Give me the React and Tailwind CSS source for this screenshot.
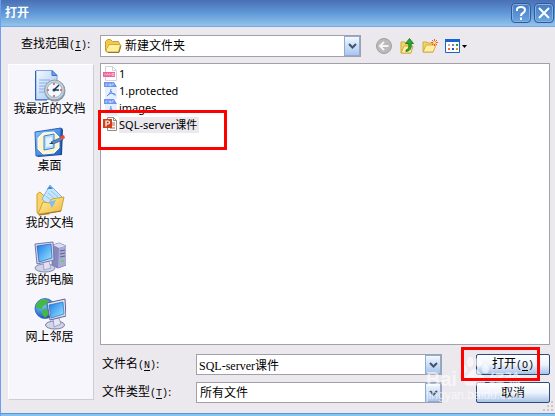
import React, { useState } from "react";

const places = [
  { name: "我最近的文档", icon: RecentIcon },
  { name: "桌面", icon: DesktopIcon },
  { name: "我的文档", icon: DocumentsIcon },
  { name: "我的电脑", icon: ComputerIcon },
  { name: "网上邻居", icon: NetworkIcon },
];

const files = [
  { name: "1", icon: ImageFileIcon },
  { name: "1.protected", icon: PdfIcon },
  { name: "images", icon: PdfIcon },
  { name: "SQL-server课件", icon: PptIcon },
];

function RecentIcon() {
  return (
    <svg width="32" height="32" viewBox="0 0 32 32">
      <defs>
        <linearGradient id="page" x1="0" y1="0" x2="1" y2="1">
          <stop offset="0" stopColor="#f4f9ff" />
          <stop offset="1" stopColor="#a3c4f3" />
        </linearGradient>
      </defs>
      <path d="M2 .5h16l5 5V29.500H2z" fill="url(#page)" stroke="#7ba5e2" />
      <path d="M1.500 1v29H13" fill="none" stroke="#2f62bd" />
      <path d="M18 .5v5h5z" fill="#6fa3ec" stroke="#3d70c4" />
      <path d="M5 10h11M5 13h8M5 16h6M5 19h5M5 22h5" stroke="#86aee8" />
      <circle cx="21" cy="21" r="10.500" fill="#8295a8" />
      <circle cx="20.500" cy="20" r="10" fill="#c5d1dc" stroke="#8f9fae" />
      <circle cx="20.500" cy="20" r="7.500" fill="#f0f9ff" stroke="#9fb2c4" />
      <path d="M20 20l5-5M20 20h5" stroke="#26384e" strokeWidth="1.500" />
      <circle cx="20" cy="20" r="1.500" fill="#26384e" />
      <path d="M20 13v2M20 25v2M13 20h2M26 20h2" stroke="#e8542e" strokeWidth="1.500" />
    </svg>
  );
}

function DesktopIcon() {
  return (
    <svg width="32" height="32" viewBox="0 0 32 32">
      <defs>
        <linearGradient id="desk" x1="0" y1="0" x2="1" y2="1">
          <stop offset="0" stopColor="#8cc6ff" />
          <stop offset="1" stopColor="#1b62c8" />
        </linearGradient>
      </defs>
      <path d="M3 5L28 1l1 2-1 25L4 30l-2-2z" fill="#1d4b96" />
      <path d="M1 5L27 1 26 27 2 29z" fill="url(#desk)" stroke="#2b66bd" />
      <path d="M9 6l11-1 5 5v11l-5 5-11 1-5-5V11z" fill="#fff5cb" stroke="#fffdf1" />
      <path d="M10 9l10-2v14l-10 2z" fill="#b4dcfc" stroke="#3a82d8" />
      <path d="M12 11l6-1v9l-6 1z" fill="#e3f4ff" />
      <path d="M17 15l11-5 1 3-10 4z" fill="#5b8cc9" stroke="#254f88" strokeWidth=".7" />
      <path d="M26 10l4-2 1 3-4 2z" fill="#ef4b2c" />
      <path d="M15 17l3-2 1 2z" fill="#333" />
    </svg>
  );
}

function DocumentsIcon() {
  return (
    <svg width="32" height="32" viewBox="0 0 32 32">
      <defs>
        <linearGradient id="docFolder" x1="0" y1="0" x2="1" y2="1">
          <stop offset="0" stopColor="#fff3a6" />
          <stop offset="1" stopColor="#f0b83c" />
        </linearGradient>
      </defs>
      <path d="M3 10l3-2 3 3 6 2v17L5 31l-2-3z" fill="#f9d568" stroke="#cf9f35" />
      <path d="M16 1l12 12-8 13-12-11z" fill="#c5e5fd" stroke="#7db4e8" />
      <path d="M13 5l3-3 3 3z" fill="#3c86d8" />
      <path d="M12 12l6 5M14 9l7 6M17 7l7 6" stroke="#8ec1f0" />
      <path d="M4 30l5-12 6 1 3-4 12-2-3 14z" fill="url(#docFolder)" stroke="#cfa13a" />
      <path d="M15 18l7-2-4 8z" fill="#7dbdf2" />
      <path d="M5 31l22-4" stroke="#977226" />
    </svg>
  );
}

function ComputerIcon() {
  return (
    <svg width="32" height="32" viewBox="0 0 32 32">
      <defs>
        <linearGradient id="screen" x1="0" y1="0" x2="1" y2="1">
          <stop offset="0" stopColor="#1c79e6" />
          <stop offset="1" stopColor="#9deaff" />
        </linearGradient>
      </defs>
      <path d="M19 4l6-2 7 3v19l-8 3-6-3z" fill="#8689be" stroke="#6d71a8" />
      <path d="M19 4l6-2 7 3-7 2z" fill="#dadcf3" />
      <path d="M25 7l7-2v19l-8 3z" fill="#a8abd4" />
      <path d="M26 10l5-1M26 13l5-1M26 16l5-1" stroke="#5b6094" />
      <circle cx="28.500" cy="20" r="1.300" fill="#63d451" />
      <ellipse cx="11" cy="27" rx="10" ry="4" fill="#cfd1e6" stroke="#8589b2" />
      <path d="M9 20h6l2 7-7 2z" fill="#dfe1f0" stroke="#8b8fb9" strokeWidth=".7" />
      <path d="M1 3l18-2 1 18-17 4z" fill="#d9dbee" stroke="#7477ab" />
      <path d="M3 5l14-2 1 14-13 4z" fill="url(#screen)" stroke="#275fae" strokeWidth=".7" />
    </svg>
  );
}

function NetworkIcon() {
  return (
    <svg width="32" height="32" viewBox="0 0 32 32">
      <defs>
        <radialGradient id="globe" cx=".35" cy=".3" r=".8">
          <stop offset="0" stopColor="#7bd2ff" />
          <stop offset="1" stopColor="#0e46b4" />
        </radialGradient>
      </defs>
      <circle cx="11" cy="10.500" r="10" fill="url(#globe)" stroke="#1c50a8" strokeWidth=".7" />
      <path d="M4 4l5-3 5 1-1 4-4 2-1 3-5-1-1-2zM9 11l5 1 1 4-4 4-3-4zM16 3l3 2-1 3-3-1z" fill="#45b83e" />
      <ellipse cx="21" cy="27" rx="9.500" ry="4" fill="#d3d5e8" stroke="#777ba8" />
      <path d="M19 20h6l2 6-7 3z" fill="#e5e6f3" stroke="#8286b2" strokeWidth=".7" />
      <path d="M13 5l18-4 1 17-16 4z" fill="#e1e3f1" stroke="#5d6299" />
      <path d="M15 7l14-3 1 12-13 4z" fill="url(#screen)" stroke="#246dc2" strokeWidth=".7" />
    </svg>
  );
}

function ImageFileIcon() {
  return (
    <svg width="16" height="17" viewBox="0 0 16 17">
      <path d="M2.500 1.500h7l4 4v10h-11z" fill="#fff" stroke="#d3d3d3" />
      <path d="M9.500 1.500v4h4" fill="none" stroke="#d3d3d3" />
      <path d="M0 7h12v5H0z" fill="#f0609a" />
      <path d="M2 8.500v2M4 10.500v-2l1.500 1 1.500-1v2M9 8.500h2v2H9z" fill="none" stroke="#ffd3e3" strokeWidth=".8" />
    </svg>
  );
}

function PdfIcon() {
  return (
    <svg width="16" height="17" viewBox="0 0 16 17">
      <path d="M2 1h8l4 4v12H2z" fill="#e8effc" />
      <path d="M1 0h10l3 5H1z" fill="#6b95f0" />
      <path d="M3 4V2h1.500M6 4V2h1.500v2M9 4V2h2" fill="none" stroke="#d5e2ff" strokeWidth=".8" />
      <path d="M8 7c0 4-3 6-4 7M8 9c1 3 3 4 5 4M5 13c2-2 5-2 7-1" fill="none" stroke="#5787ee" />
    </svg>
  );
}

function PptIcon() {
  return (
    <svg width="16" height="17" viewBox="0 0 16 17">
      <path d="M4.500 1.500h6l3 3v10h-9z" fill="#fff" stroke="#8b8b8b" />
      <path d="M10.500 1.500v3h3" fill="none" stroke="#8b8b8b" />
      <path d="M9 7h3M9 9h3M7 12h5" stroke="#c8573a" />
      <path d="M0 3h9v9H0z" fill="#d1401d" />
      <path d="M3 10.500V5h2a1.500 1.500 0 0 1 0 3H3" fill="none" stroke="#fff" strokeWidth="1.200" />
    </svg>
  );
}

function FolderIcon() {
  return (
    <svg width="18" height="16" viewBox="0 0 18 16">
      <path d="M1.500 12V3.500l2-2h3l2 2h6l1 2V12l-1 2h-12z" fill="#f3c94b" stroke="#c69c3a" />
      <path d="M5 6.500h11.500l-2 7.500h-11L2 12z" fill="#fff09c" stroke="#d3a843" />
      <path d="M4 14.500h11l2-7" fill="none" stroke="#8f7730" />
    </svg>
  );
}

function BackIcon() {
  return (
    <svg width="16" height="16" viewBox="0 0 16 16">
      <circle cx="8" cy="8" r="7.500" fill="#bababa" stroke="#a0a0a0" />
      <path d="M12.500 8H4.500M8 4L4 8l4 4" fill="none" stroke="#f5f5f5" strokeWidth="2" />
    </svg>
  );
}

function UpIcon() {
  return (
    <svg width="16" height="16" viewBox="0 0 16 16">
      <path d="M2 4h4l1 2h5v9H2z" fill="#f3d566" stroke="#d3aa48" />
      <path d="M2 15L5 8h9l-2 7z" fill="#fff0a0" stroke="#d3aa48" />
      <path d="M7 12c3-1 3-3 2.500-6.500H6.500L10.500.5l4 5h-2.500c1 5-1 7.500-5 8z" fill="#30a62e" stroke="#167019" strokeWidth=".8" />
    </svg>
  );
}

function NewFolderIcon() {
  return (
    <svg width="16" height="16" viewBox="0 0 16 16">
      <path d="M1 4h4l1 1h5v9H1z" fill="#f3d566" stroke="#d3aa48" />
      <path d="M1 14l3-7h10l-3 7z" fill="#fff0a0" stroke="#d3aa48" />
      <path d="M12.500 1v7M9 4.500h7M10 2l5 5M15 2l-5 5" stroke="#f0572d" />
      <circle cx="12.500" cy="4.500" r="1.500" fill="#ffe9a0" />
    </svg>
  );
}

function ViewsIcon() {
  return (
    <svg width="23" height="16" viewBox="0 0 23 16">
      <path d="M.5 1.500h14v13H.5z" fill="#fff" stroke="#1b62d1" />
      <path d="M0 1h15v3H0z" fill="#1b62d1" />
      <path d="M3 6h2v2H3z" fill="#c9a6b5" />
      <path d="M7 6h2v2H7z" fill="#7d80bd" />
      <path d="M11 6h2v2h-2z" fill="#27a033" />
      <path d="M3 10h2v2H3z" fill="#ef6740" />
      <path d="M7 10h2v2H7z" fill="#2452ad" />
      <path d="M11 10h2v2h-2z" fill="#c7a21c" />
      <path d="M17 7h5l-2.500 3z" fill="#000" />
    </svg>
  );
}

function Watermark() {
  return (
    <svg width="104" height="50" viewBox="0 0 104 50" fill="#fff" className="pointer-events-none absolute right-5 bottom-0 opacity-60">
      <g transform="translate(0 4) scale(.85)">
        <ellipse cx="44" cy="14" rx="4" ry="5" />
        <ellipse cx="52" cy="6" rx="4" ry="6" />
        <ellipse cx="62" cy="6" rx="4" ry="6" />
        <ellipse cx="70" cy="14" rx="4" ry="5" />
        <path d="M57 14c5 0 6 5 11 9 4 5 1 11-5 11-4 0-8-1-12 0-6 0-8-6-4-11 4-3 5-9 10-9z" />
      </g>
      <text x="0" y="33" fontSize="20" fontWeight="bold" fontFamily="Liberation Sans, sans-serif">Bai</text>
      <text x="63" y="33" fontSize="16" fontWeight="bold" fontFamily="Noto Sans CJK SC, sans-serif">经验</text>
      <text x="0" y="46" fontSize="12" fontFamily="Liberation Sans, sans-serif">jingyan.baidu.com</text>
    </svg>
  );
}

// Arrow box at the right end of each combo box
function Arrow() {
  return (
    <span className="pointer-events-none absolute inset-y-px right-px flex w-4 items-center justify-center border border-[#8fabd3] bg-linear-to-b from-[#f2f8ff] to-[#a9c6ed]">
      <svg width="9" height="6" viewBox="0 0 9 6">
        <path d="M1 1l3.500 3.500L8 1" fill="none" stroke="#41536f" strokeWidth="2" />
      </svg>
    </span>
  );
}

function Key({ children }) {
  return (
    <span className="font-['Liberation_Mono',monospace] text-[10px]">
      (<u className="underline-offset-2">{children}</u>)
    </span>
  );
}

function App() {
  const [fileName, setFileName] = useState("SQL-server课件");
  const [selected, setSelected] = useState("SQL-server课件");

  const handleSelect = (name) => {
    setSelected(name);
    setFileName(name);
  };

  return (
    <div className="flex min-h-screen flex-col border-l border-[#6c9df0] bg-[#ebe8ee] font-['Liberation_Serif','Noto_Sans_CJK_SC',sans-serif] text-xs text-black">
      {/* Title bar */}
      <header className="flex h-[27px] items-center gap-[3px] border-b border-[#78a2ea] bg-linear-to-b from-[#4a70b4] via-[#5f98d6] to-[#93c4ea] pr-px pl-1">
        <h1 className="flex-1 text-xs font-bold text-white">打开</h1>
        <button aria-label="帮助" className="flex size-5 items-center justify-center rounded-sm border border-[#31599f] bg-linear-to-b from-[#4478c0] to-[#6aa5e2] ring-1 ring-[#84b2e4] ring-inset">
          <svg width="12" height="14" viewBox="0 0 12 14" fill="none" stroke="#fff" strokeWidth="2">
            <path d="M2 5V3.500Q2 1 6 1t4 3q0 2-2 3T6 10M6 11.500V14" />
          </svg>
        </button>
        <button aria-label="关闭" className="flex size-5 items-center justify-center rounded-sm border border-[#31599f] bg-linear-to-b from-[#4478c0] to-[#6aa5e2] ring-1 ring-[#84b2e4] ring-inset">
          <svg width="12" height="12" viewBox="0 0 12 12" fill="none" stroke="#fff" strokeWidth="2">
            <path d="M1 1l10 10M11 1L1 11" />
          </svg>
        </button>
      </header>

      <main className="flex flex-1 flex-col gap-1.5 pt-2 pr-[5px] pb-2.5 pl-[7px]">
        {/* Look in */}
        <div className="flex items-center">
          <label htmlFor="folder" className="w-[92px] pb-1 pl-[13px] whitespace-nowrap">
            查找范围<Key>I</Key>:
          </label>
          <div className="relative flex-1">
            <select id="folder" className="block h-[22px] w-full appearance-none border border-[#a2a0a8] bg-white pl-6 outline-none">
              <option>新建文件夹</option>
            </select>
            <span className="pointer-events-none absolute top-[3px] left-1">
              <FolderIcon />
            </span>
            <Arrow />
          </div>
          <div className="flex w-[189px] gap-[7px] pl-[15px]">
            <button aria-label="后退"><BackIcon /></button>
            <button aria-label="向上一级"><UpIcon /></button>
            <button aria-label="新建文件夹"><NewFolderIcon /></button>
            <button aria-label="查看"><ViewsIcon /></button>
          </div>
        </div>

        <div className="flex flex-1">
          {/* Places bar */}
          <nav className="mt-px mr-1.5 mb-[3px] flex w-[86px] flex-col gap-[11px] border border-[#fff] border-r-[#cfccd4] border-b-[#cfccd4] bg-[#f7f6fc] pt-[5px] pr-[3px]">
            {places.map((p) => (
              <button key={p.name} className="flex flex-col items-center leading-[14px] whitespace-nowrap">
                <p.icon />
                {p.name}
              </button>
            ))}
          </nav>

          <div className="flex flex-1 flex-col">
            {/* File list */}
            <div className="relative flex-1 border border-[#a2a0a8] bg-white">
              <ul className="pt-px pl-0.5 font-['Noto_Sans','Noto_Sans_CJK_SC',sans-serif] text-[11px]">
                {files.map((f) => (
                  <li key={f.name}>
                    <button onClick={() => handleSelect(f.name)} className="flex h-[17px] items-center leading-4">
                      <f.icon />
                      <span className={selected === f.name ? "bg-[#ebe8ee] pr-0.5" : ""}>{f.name}</span>
                    </button>
                  </li>
                ))}
              </ul>
              <div className="pointer-events-none absolute top-[46px] -left-[3px] h-10 w-[129px] border-3 border-[#ff0000]" />
            </div>

            {/* File name and type */}
            <div className="relative mt-[9px] grid grid-cols-[96px_1fr_74px] items-center gap-y-[7px]">
              <label htmlFor="name" className="pl-0.5">
                文件名<Key>N</Key>:
              </label>
              <div className="relative mr-[34px]">
                <input
                  id="name"
                  value={fileName}
                  onChange={(e) => setFileName(e.target.value)}
                  className="block h-[21px] w-full border border-[#a2a0a8] bg-white px-0.5 outline-none"
                />
                <Arrow />
              </div>
              <button className="h-[21px] rounded-xs border border-[#2c4b80] bg-linear-to-b from-white via-[#eef4fc] to-[#a9c2e8]">
                打开<Key>O</Key>
              </button>
              <label htmlFor="type" className="pl-0.5">
                文件类型<Key>T</Key>:
              </label>
              <div className="relative mr-[34px]">
                <select id="type" className="block h-[21px] w-full appearance-none border border-[#a2a0a8] bg-white px-[3px] outline-none">
                  <option>所有文件</option>
                </select>
                <Arrow />
              </div>
              <button className="h-[21px] rounded-xs border border-[#2c4b80] bg-linear-to-b from-white via-[#eef4fc] to-[#a9c2e8]">
                取消
              </button>
              <Watermark />
              <div className="pointer-events-none absolute -top-[7px] right-[10px] h-[34px] w-[79px] border-3 border-[#ff0000]" />
            </div>
          </div>
        </div>
      </main>

      {/* Resize grip */}
      <svg width="12" height="12" viewBox="0 0 12 12" className="absolute right-px bottom-1" fill="#c8c5cd">
        <path d="M9 1h2v2H9zM5 5h2v2H5zM9 5h2v2H9zM1 9h2v2H1zM5 9h2v2H5zM9 9h2v2H9z" />
      </svg>
      <footer className="h-[3px] border-t border-[#5a94dc] bg-[#82c4ee]" />
    </div>
  );
}

export default App;
